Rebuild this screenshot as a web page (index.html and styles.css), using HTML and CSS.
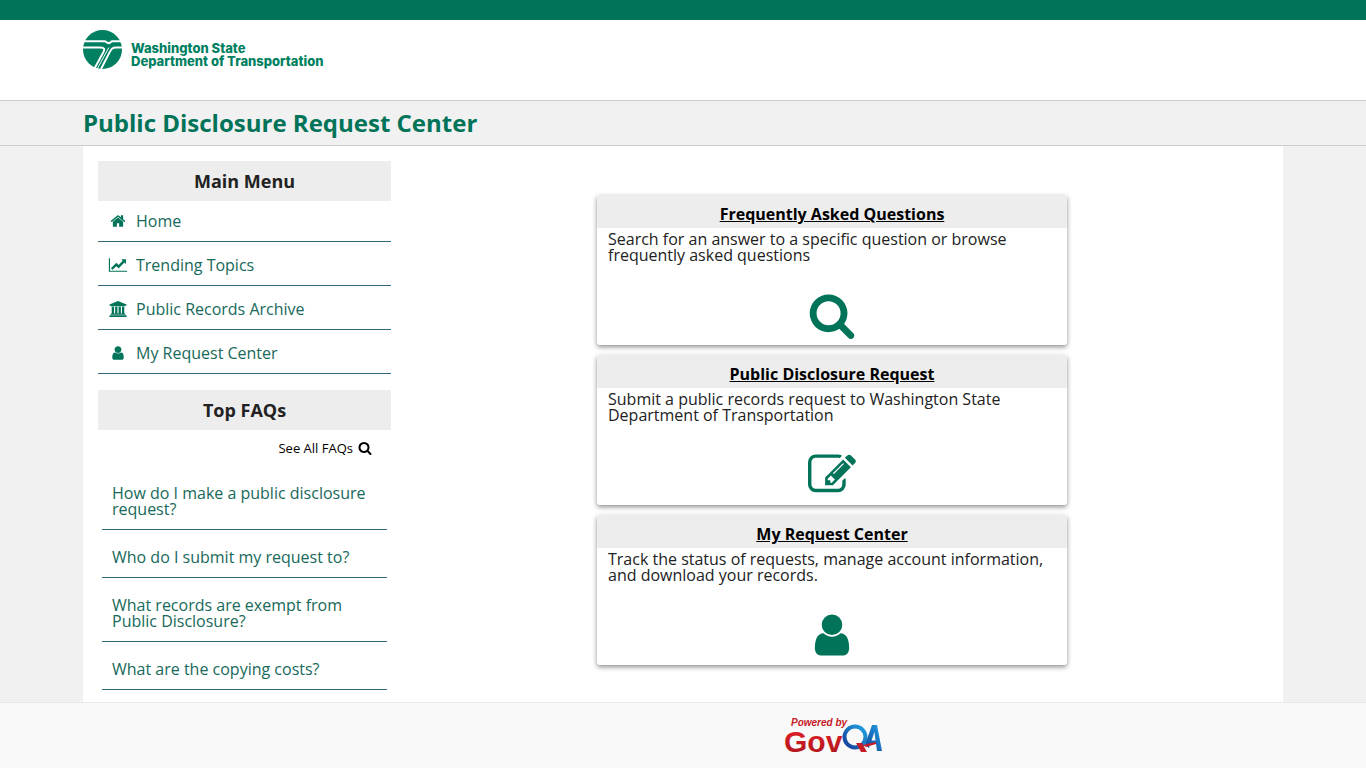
FILE: index.html
```html
<!DOCTYPE html>
<html lang="en">
<head>
<meta charset="utf-8">
<meta name="viewport" content="width=device-width, initial-scale=1">
<title>Public Disclosure Request Center</title>
<link rel="stylesheet" href="styles.css">
</head>
<body>
<svg class="sprite" aria-hidden="true">
  <symbol id="home" viewBox="0 0 1792 1792"><path d="M1472 992v480q0 26-19 45t-45 19h-384v-384h-256v384h-384q-26 0-45-19t-19-45v-480q0-1 .5-3t.5-3l575-474 575 474q1 2 1 6zm223-69l-62 74q-8 9-21 11h-3q-13 0-21-7l-692-577-692 577q-12 8-24 7-13-2-21-11l-62-74q-8-10-7-23.500t11-21.500l719-599q32-26 76-26t76 26l244 204v-195q0-14 9-23t23-9h192q14 0 23 9t9 23v408l219 182q10 8 11 21.500t-7 23.500z"/></symbol>
  <symbol id="chart" viewBox="0 0 2048 1792"><path d="M2048 1536v128h-2048v-1536h128v1408h1920zm-128-1248v435q0 21-19.500 29.500t-35.500-7.500l-121-121-633 633q-10 10-23 10t-23-10l-233-233-416 416-192-192 585-585q10-10 23-10t23 10l233 233 464-464-121-121q-16-16-7.500-35.500t29.500-19.500h435q14 0 23 9t9 23z"/></symbol>
  <symbol id="archive" viewBox="0 0 1920 1792"><path d="M960 0l960 384v128h-128q0 26-20.500 45t-48.500 19h-1526q-28 0-48.500-19t-20.500-45h-128v-128zm-704 640h256v768h128v-768h256v768h128v-768h256v768h128v-768h256v768h59q28 0 48.500 19t20.500 45v64h-1664v-64q0-26 20.500-45t48.500-19h59v-768zm1595 960q28 0 48.500 19t20.500 45v128h-1920v-128q0-26 20.500-45t48.500-19h1782z"/></symbol>
  <symbol id="user" viewBox="0 0 1792 1792"><path d="M1536 1399q0 109-62.500 187t-150.500 78h-854q-88 0-150.500-78t-62.500-187q0-85 8.500-160.500t31.500-152 58.500-131 94-89 134.500-34.500q131 128 313 128t313-128q76 0 134.500 34.500t94 89 58.500 131 31.500 152 8.500 160.500zm-256-887q0 159-112.500 271.500t-271.500 112.500-271.500-112.500-112.500-271.500 112.500-271.500 271.500-112.500 271.500 112.500 112.500 271.500z"/></symbol>
  <symbol id="search" viewBox="0 0 1792 1792"><path d="M1216 832q0-185-131.500-316.500t-316.500-131.500-316.500 131.500-131.500 316.500 131.500 316.500 316.500 131.500 316.500-131.500 131.500-316.500zm512 832q0 52-38 90t-90 38q-54 0-90-38l-343-342q-179 124-399 124-143 0-273.500-55.500t-225-150-150-225-55.500-273.500 55.500-273.500 150-225 225-150 273.500-55.500 273.500 55.500 225 150 150 225 55.500 273.500q0 220-124 399l343 343q37 37 37 90z"/></symbol>
  <symbol id="edit" viewBox="0 0 1792 1792"><path d="M888 1184l116-116-152-152-116 116v56h96v96h56zm440-720q-16-16-33 1l-350 350q-17 17-1 33t33-1l350-350q17-17 1-33zm80 594v190q0 119-84.500 203.500t-203.500 84.500h-832q-119 0-203.500-84.500t-84.500-203.500v-832q0-119 84.500-203.500t203.500-84.500h832q63 0 117 25 15 7 18 23 3 17-9 29l-49 49q-14 14-32 8-23-6-45-6h-832q-66 0-113 47t-47 113v832q0 66 47 113t113 47h832q66 0 113-47t47-113v-126q0-13 9-22l64-64q15-15 35-7t20 29zm-96-738l288 288-672 672h-288v-288zm444 132l-92 92-288-288 92-92q28-28 68-28t68 28l152 152q28 28 28 68t-28 68z"/></symbol>
</svg>

<header class="masthead">
  <div class="container">
    <a class="brand" href="#">
      <svg class="brand-mark" viewBox="0 0 40 40" aria-hidden="true">
        <circle cx="20" cy="20" r="20" fill="#007f61"/>
        <g fill="none" stroke="#fff" stroke-width="2">
          <path d="M0 11.500H22C24 11.500 24.500 13.500 26.500 13.500C28 13.500 28.500 11.500 30 11.500H40"/>
          <path d="M0 18H18C22 18 22.500 19.500 21 22.500L11.500 40"/>
          <path d="M26.500 18L14.500 40" stroke-width="1"/>
          <path d="M40 18H34C30 18 29 19.500 27.500 22.500L18.500 40"/>
        </g>
      </svg>
      <span class="brand-name">Washington State<br>Department of Transportation</span>
    </a>
  </div>
</header>

<div class="title-bar"><div class="container"><h1>Public Disclosure Request Center</h1></div></div>

<div class="container page">
  <aside class="sidebar">
    <h2>Main Menu</h2>
    <nav class="menu" aria-label="Main Menu">
      <a href="#"><svg class="icon"><use href="#home"/></svg>Home</a>
      <a href="#"><svg class="icon"><use href="#chart"/></svg>Trending Topics</a>
      <a href="#"><svg class="icon"><use href="#archive"/></svg>Public Records Archive</a>
      <a href="#"><svg class="icon"><use href="#user"/></svg>My Request Center</a>
    </nav>
    <h2>Top FAQs</h2>
    <a class="see-all" href="#">See All FAQs <svg class="icon-small"><use href="#search"/></svg></a>
    <nav class="faqs" aria-label="Top FAQs">
      <a href="#">How do I make a public disclosure request?</a>
      <a href="#">Who do I submit my request to?</a>
      <a href="#">What records are exempt from Public Disclosure?</a>
      <a href="#">What are the copying costs?</a>
    </nav>
  </aside>
  <main class="cards">
    <section class="card">
      <h3><a href="#">Frequently Asked Questions</a></h3>
      <p>Search for an answer to a specific question or browse frequently asked questions</p>
      <svg class="icon-large"><use href="#search"/></svg>
    </section>
    <section class="card">
      <h3><a href="#">Public Disclosure Request</a></h3>
      <p>Submit a public records request to Washington State Department of Transportation</p>
      <svg class="icon-large"><use href="#edit"/></svg>
    </section>
    <section class="card">
      <h3><a href="#">My Request Center</a></h3>
      <p>Track the status of requests, manage account information, and download your records.</p>
      <svg class="icon-large"><use href="#user"/></svg>
    </section>
  </main>
</div>

<footer class="footer">
  <a href="#" aria-label="Powered by GovQA">
    <svg class="govqa" viewBox="0 0 100 48">
      <defs>
        <linearGradient id="red" x1="0" y1="0" x2="0" y2="1"><stop offset="0" stop-color="#e8202a"/><stop offset="1" stop-color="#a8141c"/></linearGradient>
        <linearGradient id="blue" x1="0" y1="1" x2="1" y2="0"><stop offset="0" stop-color="#153c96"/><stop offset="1" stop-color="#1fa4e4"/></linearGradient>
      </defs>
      <text class="powered" x="7" y="10">Powered by</text>
      <text class="gov" x="0" y="36" fill="url(#red)">Gov</text>
      <circle cx="71" cy="21" r="10.500" fill="none" stroke="url(#blue)" stroke-width="4"/>
      <path d="M81 29L88 9H93L98 35H93L92 28H86L85 32ZM87.500 24.500H91.500L90.500 16Z" fill="url(#blue)" fill-rule="evenodd"/>
      <path d="M72 27H78L83 36H77Z" fill="#c51c28"/>
      <path d="M79 29L92 26V28L82 31Z" fill="#c51c28"/>
    </svg>
  </a>
</footer>
</body>
</html>
```
FILE: styles.css
```css
* { box-sizing: border-box; }

body {
  display: flex;
  flex-direction: column;
  min-height: 100vh;
  margin: 0;
  background: #f1f1f1;
  color: #222;
  font: 16px/16px "Open Sans", "Noto Sans", sans-serif;
}

h1, h2, h3, p { margin: 0; }
a { color: #17695a; text-decoration: none; }
.sprite { position: absolute; width: 0; height: 0; }

.container {
  width: 100%;
  max-width: 1200px;
  margin: 0 auto;
}

.masthead {
  min-height: 100px;
  padding-top: 10px;
  border-top: 20px solid #007358;
  background: #fff;
}

.brand {
  display: inline-flex;
  align-items: flex-start;
  gap: 9px;
  color: #007f61;
}
.brand-mark { width: 39px; height: 39px; }
.brand-name {
  padding-top: 12px;
  font: 800 13px/13px Inter, "Liberation Sans", sans-serif;
}

.title-bar {
  padding: 6px 0;
  border: solid #ccc;
  border-width: 1px 0;
}
.title-bar h1 {
  color: #007358;
  font-size: 24px;
  line-height: 32px;
}

.page {
  display: flex;
  flex: 1;
  padding: 15px 10px 12px 15px;
  background: #fff;
}

.sidebar { width: 293px; }
.sidebar h2 {
  padding: 8px;
  background: #ededed;
  font-size: 18px;
  font-weight: 700;
  line-height: 24px;
  text-align: center;
}

.menu { margin-bottom: 16px; }
.menu a {
  display: flex;
  align-items: center;
  gap: 8px;
  padding: 15px 10px 12px;
  border-bottom: 1px solid #326b80;
}
.menu a:first-child { padding-top: 12px; }
.icon { width: 20px; height: 16px; fill: #007358; }

.see-all {
  display: flex;
  justify-content: flex-end;
  align-items: center;
  gap: 5px;
  padding: 9px 19px;
  color: #000;
  font-size: 13px;
  line-height: 18px;
}
.icon-small { width: 14px; height: 14px; }

.faqs { padding: 0 4px; }
.faqs a {
  display: block;
  padding: 19px 10px 12px;
  border-bottom: 1px solid #326b80;
}

.cards {
  display: flex;
  flex: 1;
  flex-direction: column;
  align-items: center;
  gap: 10px;
  padding-top: 34px;
}
.card {
  display: flex;
  flex-direction: column;
  width: 100%;
  max-width: 470px;
  min-height: 150px;
  padding-bottom: 6px;
  border-radius: 3px;
  background: #fff;
  box-shadow: 0 2px 5px rgba(0, 0, 0, .45);
}
.card h3 {
  padding: 11px 8px 6px;
  border-radius: 3px 3px 0 0;
  background: #ededed;
  font-size: 16px;
  font-weight: 700;
  line-height: 16px;
  text-align: center;
}
.card h3 a { color: #000; text-decoration: underline; }
.card p { padding: 3px 11px; }
.icon-large {
  width: 48px;
  height: 48px;
  margin: auto auto 0;
  fill: #007358;
}

.footer {
  min-height: 66px;
  padding-top: 13px;
  border-top: 1px solid #e8e8e8;
  background: #f9f9f9;
  text-align: center;
}
.footer a { margin-left: 302px; }
.govqa { width: 100px; height: 48px; overflow: visible; }
.powered { fill: #c51c28; font: italic bold 10px "Liberation Sans", sans-serif; }
.gov { font: bold 30px/30px "Liberation Sans", sans-serif; }
```
